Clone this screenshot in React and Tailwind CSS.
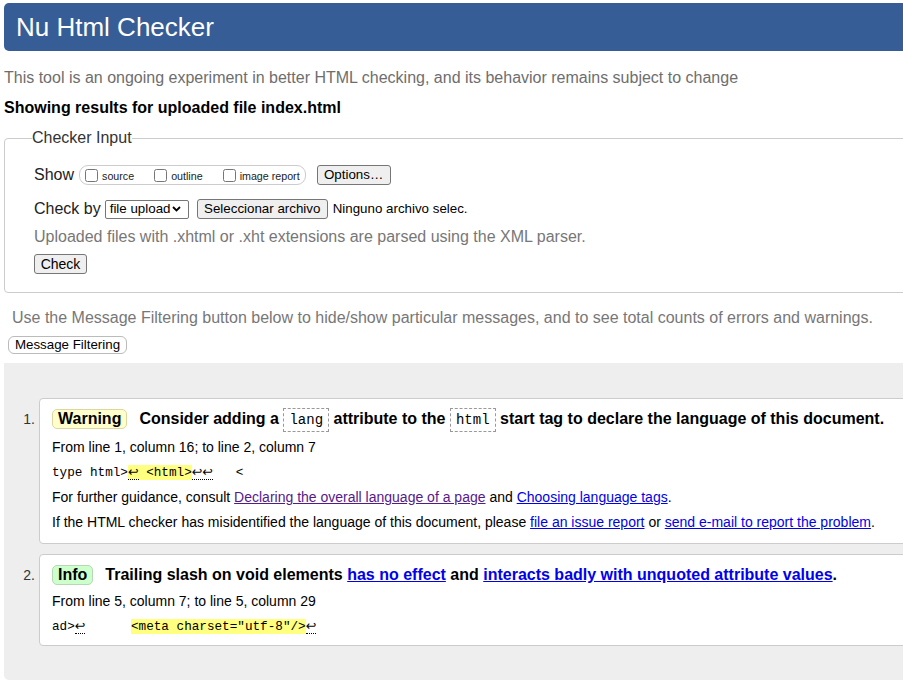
import React from 'react'

const sans = "font-['Liberation_Sans',Arial,sans-serif]"
const mono = "font-['Liberation_Mono','DejaVu_Sans_Mono',monospace]"

function NativeButton({ children, className = '' }) {
  return (
    <button
      className={`flex items-center justify-center shrink-0 bg-[#efefef] border border-[#767676] rounded-[3px] px-[6px] text-[13.33px] leading-none text-black ${className}`}
    >
      {children}
    </button>
  )
}

function Check({ label }) {
  return (
    <label className="flex items-center gap-[4px]">
      <input type="checkbox" className="w-[13px] h-[13px]" />
      <span className="text-[10.7px] pt-[3px] text-[#222]">{label}</span>
    </label>
  )
}

// return-arrow glyph with a dotted underline, as the checker marks line breaks
function Ret({ children }) {
  return (
    <span className="font-['DejaVu_Sans',sans-serif] border-b border-dotted border-black">{children}</span>
  )
}

function Hl({ children }) {
  return <span className="bg-[#ffff80]">{children}</span>
}

function Card({ num, children, className = '' }) {
  return (
    <div className="flex">
      <div className="w-[35px] pr-[4px] mt-[11px] h-[20px] leading-[20px] text-right text-[14px] text-[#333]">
        {num}.
      </div>
      <div
        className={`flex-1 bg-white border border-[#ccc] rounded-[4px] pl-[12px] pt-[10px] ${className}`}
      >
        {children}
      </div>
    </div>
  )
}

const codeBox = `${mono} font-normal text-[14px] px-[5px] py-[3px] border border-dashed border-[#999]`

export default function App() {
  return (
    <div className={`w-[903px] h-[695px] overflow-hidden bg-white text-black ${sans}`}>
      <div className="w-[1000px] pl-[4px]">
        {/* Header */}
        <div className="mt-[3px] h-[48px] bg-[#365d95] rounded-l-[5px] flex items-center pl-[12px]">
          <h1 className="text-[26px] text-white leading-none">Nu Html Checker</h1>
        </div>

        <p className="mt-[18px] text-[16px] leading-[18px] text-[#6e6e6e]">
          This tool is an ongoing experiment in better HTML checking, and its behavior remains subject to change
        </p>
        <p className="mt-[12px] text-[16px] leading-[18px] font-bold">
          Showing results for uploaded file index.html
        </p>

        {/* Checker input */}
        <fieldset className="mt-[12px] border border-[#ccc] rounded-[4px] pl-[29px] pt-[18px] pb-[18px]">
          <legend className="ml-[-2px] text-[16px] leading-[18px] text-[#333]">Checker Input</legend>

          <div className="flex items-center h-[20px] text-[#222]">
            <span className="text-[16px] leading-[18px]">Show</span>
            <div className="ml-[5px] h-[20px] border border-[#ccc] rounded-[9px] flex items-center pl-[5px] pr-[5px] gap-[20px]">
              <Check label="source" />
              <Check label="outline" />
              <Check label="image report" />
            </div>
            <NativeButton className="ml-[11px] h-[20px] w-[74px]">Options…</NativeButton>
          </div>

          <div className="flex items-center h-[20px] mt-[14px] text-[#222]">
            <span className="text-[16px] leading-[18px]">Check by</span>
            <div className="ml-[4px] h-[19px] w-[84px] border border-[#767676] rounded-[2px] flex items-center justify-between pl-[4px] pr-[7px] text-[13.33px] text-black">
              <span>file upload</span>
              <svg width="9" height="6" viewBox="0 0 9 6" fill="none">
                <path d="M1 1l3.5 3.5L8 1" stroke="#000" strokeWidth="1.8" />
              </svg>
            </div>
            <NativeButton className="ml-[8px] h-[20px] w-[131px]">Seleccionar archivo</NativeButton>
            <span className="ml-[5px] text-[13.33px] text-black">Ninguno archivo selec.</span>
          </div>

          <p className="mt-[9px] text-[16px] leading-[18px] text-[#777]">
            Uploaded files with .xhtml or .xht extensions are parsed using the XML parser.
          </p>

          <NativeButton className="mt-[8px] h-[20px] w-[53px] text-[14px]">Check</NativeButton>
        </fieldset>

        <p className="mt-[16px] pl-[8px] text-[16px] leading-[18px] text-[#777]">
          Use the Message Filtering button below to hide/show particular messages, and to see total counts of errors and warnings.
        </p>
        <button className="block mt-[9px] ml-[4px] h-[18px] w-[119px] border border-[#bbb] rounded-[6px] bg-white text-[13.33px] leading-none text-black">
          Message Filtering
        </button>

        {/* Results */}
        <div className="mt-[9px] bg-[#eeeeee] rounded-bl-[5px] pt-[35px] pb-[34px] pr-[60px] flex flex-col gap-[10px]">
          <Card num={1} className="pb-[9px]">
            <div className="h-[20px] leading-[20px] text-[16px] font-bold whitespace-nowrap">
              <span className="inline-block h-[20px] leading-[18px] px-[5px] mr-[12px] bg-[#ffffcc] border border-[#ddd6a0] rounded-[5px]">
                Warning
              </span>
              Consider adding a{' '}
              <code className={codeBox}>lang</code>{' '}
              attribute to the{' '}
              <code className={codeBox}>html</code>{' '}
              start tag to declare the language of this document.
            </div>
            <div className="mt-[6px] text-[14px] leading-[24.5px]">
              <p>From line 1, column 16; to line 2, column 7</p>
              <p className={`${mono} text-[12.67px] whitespace-pre`}>
                type html&gt;<Hl><Ret>↩</Ret> &lt;html&gt;</Hl><Ret>↩↩</Ret>{'   <'}
              </p>
              <p>
                For further guidance, consult{' '}
                <a className="text-[#551a8b] underline">Declaring the overall language of a page</a> and{' '}
                <a className="text-[#0000ee] underline">Choosing language tags</a>.
              </p>
              <p>
                If the HTML checker has misidentified the language of this document, please{' '}
                <a className="text-[#0000ee] underline">file an issue report</a> or{' '}
                <a className="text-[#0000ee] underline">send e-mail to report the problem</a>.
              </p>
            </div>
          </Card>

          <Card num={2} className="pb-[6px]">
            <div className="h-[20px] leading-[20px] text-[16px] font-bold whitespace-nowrap">
              <span className="inline-block h-[20px] leading-[18px] px-[5px] mr-[12px] bg-[#ccffcc] border border-[#b5d9b5] rounded-[5px]">
                Info
              </span>
              Trailing slash on void elements{' '}
              <a className="text-[#0000ee] underline">has no effect</a> and{' '}
              <a className="text-[#0000ee] underline">interacts badly with unquoted attribute values</a>.
            </div>
            <div className="mt-[4px] text-[14px] leading-[24.5px]">
              <p>From line 5, column 7; to line 5, column 29</p>
              <p className={`${mono} text-[12.67px] whitespace-pre`}>
                ad&gt;<Ret>↩</Ret>{'      '}<Hl>&lt;meta charset="utf-8"/&gt;</Hl><Ret>↩</Ret>
              </p>
            </div>
          </Card>
        </div>
      </div>
    </div>
  )
}
